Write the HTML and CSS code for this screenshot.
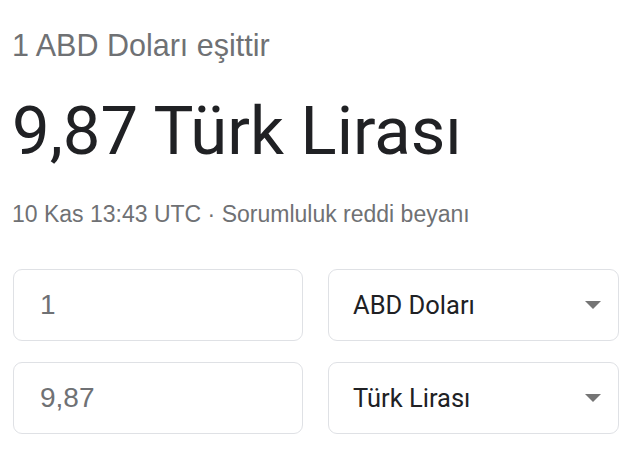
FILE: index.html
```html
<!DOCTYPE html>
<html lang="tr">
<head>
    <meta charset="UTF-8">
    <meta name="viewport" content="width=device-width, initial-scale=1.0">
    <title>Döviz çevirici</title>
    <link rel="stylesheet" href="styles.css">
</head>
<body>
    <div class="converter">
        <div class="from-line">1 ABD Doları eşittir</div>
        <div class="result">9,87 Türk Lirası</div>
        <div class="meta">10 Kas 13:43 UTC · Sorumluluk reddi beyanı</div>

        <div class="fields">
            <div class="box amount">1</div>
            <div class="box currency">
                <span>ABD Doları</span>
                <svg class="caret" width="16" height="8" viewBox="0 0 16 8"><path d="M0 0h16L8 8z"/></svg>
            </div>
            <div class="box amount">9,87</div>
            <div class="box currency">
                <span>Türk Lirası</span>
                <svg class="caret" width="16" height="8" viewBox="0 0 16 8"><path d="M0 0h16L8 8z"/></svg>
            </div>
        </div>
    </div>
</body>
</html>
```

FILE: styles.css
```css
*{padding: 0; margin: 0; box-sizing: border-box;}
body {background: #fff; font-family: "Liberation Sans", Arial, sans-serif;}

.converter {padding: 27px 0 0 12px;}
.from-line {font-size: 30.5px; line-height: 36px; color: #6f7174;}
.result {margin-top: 28px; font-family: Roboto, "Liberation Sans", sans-serif; font-size: 67px; line-height: 80px; color: #202124;}
.meta {margin-top: 30px; font-size: 23px; line-height: 26px; color: #6f7174;}

.fields {display: grid; grid-template-columns: 290px 291px; column-gap: 25px; row-gap: 21px; margin: 42px 0 0 1px;}
.box {height: 72px; border: 1px solid #dfe1e5; border-radius: 9px; display: flex; align-items: center;}
.amount {padding-left: 26px; font-size: 28px; color: #6f7174;}
.currency {padding: 0 17px 0 24px; justify-content: space-between; font-family: Roboto, "Liberation Sans", sans-serif; font-size: 25.5px; color: #202124;}
.caret {fill: #757575;}
```
